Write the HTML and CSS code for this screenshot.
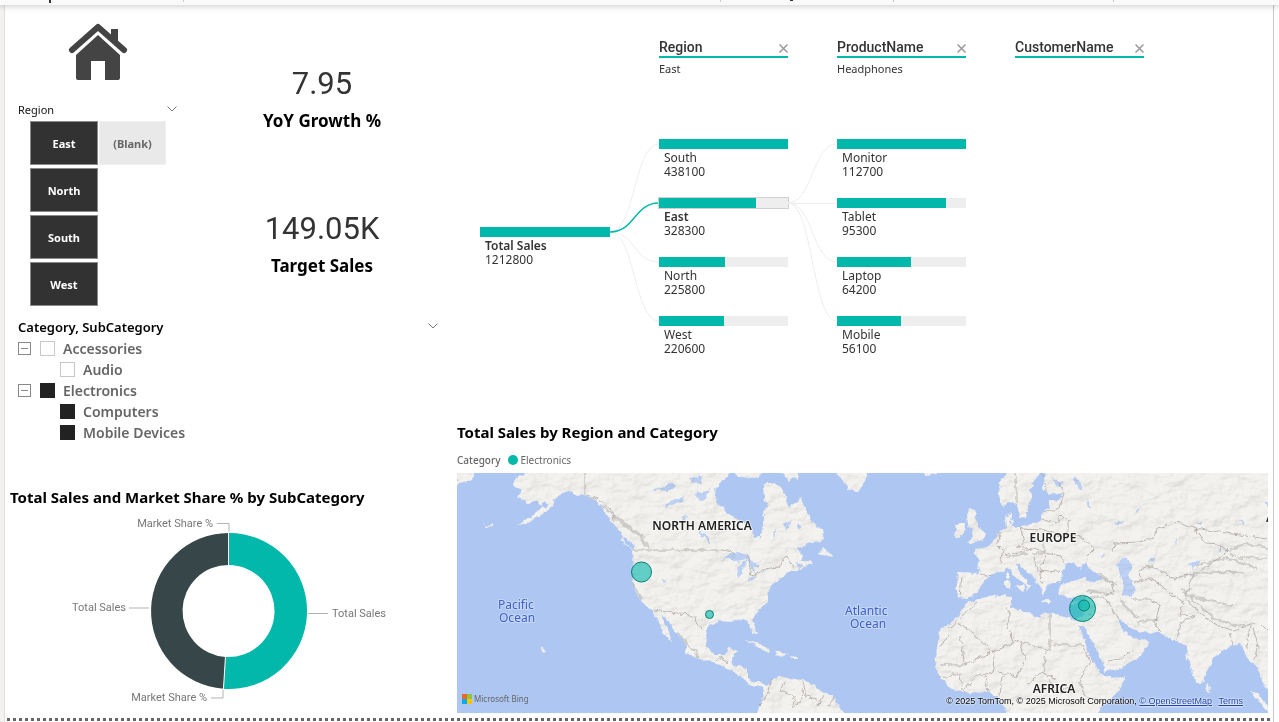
FILE: index.html
```html
<!DOCTYPE html>
<html lang="en">
<head>
<meta charset="utf-8">
<title>Sales report</title>
<link rel="stylesheet" href="styles.css">
</head>
<body>
<div class="app">
  <header class="ribbon">
    <svg class="ribbon-marks" width="1279" height="5" viewBox="0 0 1279 5" aria-hidden="true">
      <path d="M183.500 0v2M720.500 0v2M893.500 0v2M1113.500 0v2" stroke="#c8c8c8"/>
      <path d="M49 0h2v3h-2zM790 0h3v1h-3z" fill="#333"/>
    </svg>
  </header>
  <main class="canvas">
    <section class="left">
      <div class="summary">
        <div class="nav">
          <svg class="home" viewBox="0 0 58 58" role="img" aria-label="Home">
            <path d="M7 31 29 11 51 31V54q0 2-2 2H36V37H22V56H9q-2 0-2-2Z" fill="#444"/>
            <path d="M3 26 29 3 55 26" fill="none" stroke="#fff" stroke-width="9" stroke-linejoin="round"/>
            <path d="M42 5h7v17l-7-6Z" fill="#444"/>
            <path d="M3 26 29 3 55 26" fill="none" stroke="#444" stroke-width="6" stroke-linecap="round" stroke-linejoin="round"/>
          </svg>
          <div class="slicer-head"><span>Region</span>
            <svg class="chevron" viewBox="0 0 10 6" aria-hidden="true"><path d="M.5.5 5 5 9.500.5"/></svg>
          </div>
          <div class="tiles">
            <button class="tile on" aria-pressed="true">East</button>
            <button class="tile" aria-pressed="false">(Blank)</button>
            <button class="tile on" aria-pressed="true">North</button>
            <button class="tile on" aria-pressed="true">South</button>
            <button class="tile on" aria-pressed="true">West</button>
          </div>
        </div>
        <div class="cards">
          <div class="card"><div class="card-value">7.95</div><div class="card-label">YoY Growth %</div></div>
          <div class="card"><div class="card-value">149.05K</div><div class="card-label">Target Sales</div></div>
        </div>
      </div>
      <div class="category">
        <div class="category-head"><span>Category, SubCategory</span>
          <svg class="chevron" viewBox="0 0 10 6" aria-hidden="true"><path d="M.5.5 5 5 9.500.5"/></svg>
        </div>
        <div class="row"><button class="expander" aria-label="Collapse Accessories"></button><label><input type="checkbox">Accessories</label></div>
        <div class="row child"><label><input type="checkbox">Audio</label></div>
        <div class="row"><button class="expander" aria-label="Collapse Electronics"></button><label><input type="checkbox" checked>Electronics</label></div>
        <div class="row child"><label><input type="checkbox" checked>Computers</label></div>
        <div class="row child"><label><input type="checkbox" checked>Mobile Devices</label></div>
      </div>
      <h2 class="title donut-title">Total Sales and Market Share % by SubCategory</h2>
      <svg class="donut" viewBox="0 0 447 196" role="img" aria-label="Total Sales and Market Share by SubCategory">
        <path d="M223.500 21A78 78 0 1 1 218.500 176.800L220.500 144.900A46 46 0 1 0 223.500 53Z" fill="#01b8aa"/>
        <path d="M223.500 21A78 78 0 0 0 218.500 176.800L220.500 144.900A46 46 0 0 1 223.500 53Z" fill="#374649"/>
        <path d="M223.500 20V54M218.400 178 220.500 144" stroke="#fff"/>
        <path d="M212 11.500h12v8M124 96h20M303 101.500h20M206 186h12v-8" fill="none" stroke="#b3b3b3"/>
        <g class="donut-label">
          <text x="208" y="15" text-anchor="end">Market Share %</text>
          <text x="121" y="99" text-anchor="end">Total Sales</text>
          <text x="327" y="105">Total Sales</text>
          <text x="202" y="189" text-anchor="end">Market Share %</text>
        </g>
      </svg>
    </section>

    <section class="right">
      <div class="tree">
        <div class="level level-root">
          <div class="node"><div class="bar"><i style="width:100%"></i></div><b>Total Sales</b><span>1212800</span></div>
        </div>
        <svg class="links" viewBox="0 0 49 200" aria-hidden="true">
          <g fill="none" stroke="#eee"><path d="M0 93C25 93 24 5 49 5M0 93C25 93 24 123 49 123M0 93C25 93 24 182 49 182"/></g>
          <path d="M0 93C25 93 24 64 49 64" fill="none" stroke="#01b8aa" stroke-width="1.500"/>
        </svg>
        <div class="level">
          <div class="level-head"><span>Region</span><button class="close" aria-label="Remove Region"><svg viewBox="0 0 9 9"><path d="M.5.5l8 8m0-8l-8 8"/></svg></button></div>
          <div class="selected">East</div>
          <div class="node"><div class="bar"><i style="width:100%"></i></div><span>South</span><span>438100</span></div>
          <div class="node"><div class="bar active"><i style="width:75%"></i></div><b>East</b><span>328300</span></div>
          <div class="node"><div class="bar"><i style="width:51.500%"></i></div><span>North</span><span>225800</span></div>
          <div class="node"><div class="bar"><i style="width:50.400%"></i></div><span>West</span><span>220600</span></div>
        </div>
        <svg class="links" viewBox="0 0 49 200" aria-hidden="true">
          <g fill="none" stroke="#eee"><path d="M0 64C25 64 24 5 49 5M0 64.500H49M0 64C25 64 24 123 49 123M0 64C25 64 24 182 49 182"/></g>
        </svg>
        <div class="level">
          <div class="level-head"><span>ProductName</span><button class="close" aria-label="Remove ProductName"><svg viewBox="0 0 9 9"><path d="M.5.5l8 8m0-8l-8 8"/></svg></button></div>
          <div class="selected">Headphones</div>
          <div class="node"><div class="bar"><i style="width:100%"></i></div><span>Monitor</span><span>112700</span></div>
          <div class="node"><div class="bar"><i style="width:84.600%"></i></div><span>Tablet</span><span>95300</span></div>
          <div class="node"><div class="bar"><i style="width:57%"></i></div><span>Laptop</span><span>64200</span></div>
          <div class="node"><div class="bar"><i style="width:49.800%"></i></div><span>Mobile</span><span>56100</span></div>
        </div>
        <div></div>
        <div class="level">
          <div class="level-head"><span>CustomerName</span><button class="close" aria-label="Remove CustomerName"><svg viewBox="0 0 9 9"><path d="M.5.5l8 8m0-8l-8 8"/></svg></button></div>
        </div>
      </div>

      <h2 class="title">Total Sales by Region and Category</h2>
      <div class="legend"><b>Category</b><i class="dot"></i><span>Electronics</span></div>
      <div class="map">
        <svg class="map-art" viewBox="0 0 811 240" preserveAspectRatio="xMidYMid slice" role="img" aria-label="Map of total sales by region">
          <defs>
            <filter id="coast" x="0" y="0" width="100%" height="100%">
              <feTurbulence type="fractalNoise" baseFrequency=".16" numOctaves="3" seed="4" result="n"/>
              <feDisplacementMap in="SourceGraphic" in2="n" scale="6" xChannelSelector="R" yChannelSelector="G"/>
            </filter>
            <filter id="relief" x="0" y="0" width="100%" height="100%" color-interpolation-filters="sRGB">
              <feTurbulence type="fractalNoise" baseFrequency=".05 .08" numOctaves="4" seed="9"/>
              <feDiffuseLighting surfaceScale="3" diffuseConstant="1.050" lighting-color="#fff"><feDistantLight azimuth="225" elevation="65"/></feDiffuseLighting>
            </filter>
            <path id="land-shape" d="M0-4H18L15 7 6 9 0 13Z
              M68-4V0L60 5 56 12 65 17 60 24 71 30 80 27 85 34 76 43 61 52 73 49 90 37 95 32 100 24 110 17 120 22 130 23 140 27 146 37 153 47 158 54 165 60 166 69 175 77 175 84 176 92 175 100 176 110 180 122 188 132 195 137 200 147 206 159 215 168 210 155 204 142 210 145 215 154 223 164 230 172 228 179 240 185 256 189 273 197 286 205 293 212 305 214 308 217 305 227 298 244H388L380 230 378 224 366 219 356 212 346 207 330 205 323 203 315 207 310 214 305 209 296 209 290 204 290 195 276 192 275 187 279 177 271 175 268 182 258 182 250 174 249 160 251 152 263 148 275 149 286 146 291 150 296 161 299 160 296 145 301 137 311 129 310 122 316 110 326 104 331 99 343 94 355 91 351 88 343 89 346 84 340 76 350 70 365 69 367 59 356 50 349 37 343 24 340 29 331 34 328 19 318 10 308 10 306 20 311 30 306 40 306 54 303 64 298 65 295 55 283 47 270 40 260 30 258 20 263 9 270 4 271-4Z
              M276-4 280 4 300 5 306 0 302-4ZM322-4 326 1 333 8 336 4 341 8 341-4Z
              M379-4 386 7 391 15 401 20 405 14 411-4ZM365 74 373 79 376 85 361 81ZM338 90 350 93 344 96ZM289 168 298 169 314 177 312 180 300 174ZM317 178 331 181 323 184ZM334 183h6v2h-6Z
              M85 30 91 28 89 34 85 36ZM166 63 178 73 176 77 168 70ZM150 38 156 49 160 52 156 40Z
              M462-4H480V1L468 2ZM83 172 89 177 86 180ZM27 53l10-2v2l-10 1Z
              M553-4 543 10 541 20 545 32 555 29 560 30 563 45 569 45 571 34 575 25 573 17 578 7 587-4Z
              M588-4 586 15 593 22 606 20 603 27 591 27 593 34 586 39 585 45 580 50 563 54 555 54 554 40 549 44 550 55 543 59 535 69 530 74 518 77 518 82 522 87 521 100 501 99 500 107 500 124 510 125 521 120 525 112 533 102 543 99 551 95 558 104 570 113 569 120 573 112 563 100 558 91 563 91 573 102 581 110 586 122 590 114 595 109 603 109 605 99 610 90 618 89 623 95 630 87 631 95 641 102 647 107 638 109 626 105 613 109 603 112 601 120 610 125 627 124 625 144 618 147 610 145 596 140 586 139 583 145 570 140 558 135 553 134 555 124 548 123 530 124 510 130 503 140 496 149 483 157 480 174 478 194 483 204 495 217 513 220 531 219 541 225 553 244H636L650 229 663 217 668 204 651 205 643 200 633 184 626 164 622 152 626 152 635 169 645 187 648 199 670 192 683 184 693 169 685 165 676 167 666 157 661 147 663 145 671 154 683 159 703 160 718 167 730 174 731 187 740 210 745 210 750 197 756 185 775 172 783 170 791 187 800 194 806 210 815 220V-4Z
              M513 35 510 40 511 52 516 57 515 64 511 70 526 67 529 61 522 54 518 45 519 38ZM500 52 508 50 507 62 498 64ZM559 113l9-1-2 6ZM549 107h4l-1 8h-3ZM549 100h3v5h-3ZM585 128h9v2h-9ZM614 129l8-2-4 4ZM750 209l4 6-1 5-4-2ZM552 47l5-1v4h-4ZM793 218l7 3 14 15v6Z"/>
            <clipPath id="land-clip"><use href="#land-shape"/></clipPath>
          </defs>
          <rect width="811" height="240" fill="#adc6f2"/>
          <g filter="url(#coast)">
            <use href="#land-shape" fill="#f0efeb"/>
            <g fill="#adc6f2">
              <path d="M195 14 205 15 213 10 220 13 211 18 200 17ZM206 32 217 26 227 24 225 28 210 34ZM233 5l14-2-4 8-8-3ZM240 20l11-2 3-6-5 14-7 3ZM224 45l7-2-4 5ZM240 59l12 4 2 9-5-6ZM264 85 276 79 291 82 293 85 280 88ZM280 95l6-5 5-5-3 8-6 13ZM291 86l8 3 3 6-5-2 1 8-6-10ZM291 106l10-5-3 4-7 3ZM303 99l8-3-5 4ZM327 52l6-4-1 7-4 2ZM316 60l4-6-3 11ZM341 50l5 3-5 3ZM205 105l3 3-2 3Z"/>
              <path d="M660 90 668 85 676 94 671 102 678 114 676 124 666 122 665 109ZM619 2l7 14-4 2-6-13ZM596 6l11 4-5 3-5-1ZM629 25l5 9-3 0ZM658 50l9-3-6 6ZM679 36l6-2-5 5ZM644 82l4-3-3 6ZM690 87l8-2-1 4ZM730 91l15-4-10 9ZM718 67h2l-1 6ZM740 51l5-2-1 4ZM780 47l9 2-3 3ZM808 28l4 2v6ZM760 77l5-3-2 6Z"/>
            </g>
          </g>
          <g clip-path="url(#land-clip)" opacity=".2"><rect width="811" height="240" filter="url(#relief)" style="mix-blend-mode:multiply"/></g>
          <g class="borders" filter="url(#coast)">
            <path d="M127 0V21L141 26 154 37 158 49M175 77H266L277 79M291 84 294 103 307 96 322 94 326 86 331 84 336 95M197 137 221 141 235 142 247 158M259 187l7-3 4 8M315 205l-5 17-8 10M328 208l-5 10 14 5-1 12 10-8-1-12M346 208l3 15 12 4M366 220l-4 12M378 224l-8 10"/>
            <path d="M559 0 559 29M585 0 591 20M602 10 607 20 603 35 586 40M585 46 600 50 604 42 611 49 611 62 600 62 585 57 564 56M564 55 567 71 560 74 575 76 587 79 587 70M611 62 622 63 638 76 628 86M543 60 541 73 546 78 543 90M547 82 568 78 574 76M575 80 587 80 604 83 608 91M577 83 580 98 593 99 604 97M590 83 583 94 585 110M522 100l12 3M505 103 503 123M550 134l3 11-3 11M521 128 502 146 492 155M502 149 537 179 562 167 593 178 593 141M596 172H625M553 157l3 12M503 163 508 192H481M483 174 492 161M508 192l16-8 13-6M537 180l-1 19-18 5-9 11M563 168l5 18-8 17-24-5M589 178l-3 22 16 20 15-10M625 172l8 16-10 18 4 18 20 4M570 212l14-12 15 5M482 204l22-3M500 200l8 20M528 203l3 16M545 203l-2 20"/>
            <path d="M626 124 647 124 662 147M626 124 633 143M642 103 655 110 658 118 647 124M660 112l-8-5M674 126 692 126 703 131 698 151 703 160M678 110 692 105 714 120 726 129 723 142 738 143 724 150 720 167M656 79 657 70 682 69 697 65 699 56 721 49 739 55 748 70 762 71 771 78 744 98 718 106 694 93 682 96 683 106M762 72 780 85 811 85M739 55 768 60 811 66M737 101 728 125 740 138 758 151 777 158 793 152 790 175M773 160l3 12M796 155l5 18-4 14M803 150l8 8M650 188l14-2 14-10"/>
          </g>
          <g class="ridges" filter="url(#coast)">
            <path d="M146 33 168 53 182 62 191 75M176 110l9 17M221 160l22 25M163 47l25 18M725 115 738 129 755 144 778 153 799 151M729 103 758 99 786 99M725 120 750 127 776 133M740 92 770 85 800 95M772 77 790 70 811 75M640 100 652 107M662 126 681 145M680 150l22-5M630 118l28 4M550 84l20-3"/>
          </g>
          <g class="bubbles">
            <circle cx="184.500" cy="99" r="10"/><circle cx="252.500" cy="141.500" r="4"/>
            <circle cx="625.500" cy="135.500" r="13"/><circle cx="627" cy="132.500" r="5.500"/>
          </g>
          <g class="continent" text-anchor="middle">
            <text x="245" y="57">NORTH AMERICA</text><text x="596" y="69">EUROPE</text><text x="597" y="220">AFRICA</text><text x="809" y="49" text-anchor="start">A</text>
          </g>
          <g class="ocean">
            <text x="41" y="136">Pacific</text><text x="42" y="149">Ocean</text>
            <text x="388" y="142">Atlantic</text><text x="393" y="155">Ocean</text>
          </g>
        </svg>
        <div class="map-footer">
          <span class="bing"><svg width="10" height="10" viewBox="0 0 10 10" aria-hidden="true"><path d="M0 0h5v5H0z" fill="#f26522"/><path d="M5 0h5v5H5z" fill="#8dc63f"/><path d="M0 5h5v5H0z" fill="#00aeef"/><path d="M5 5h5v5H5z" fill="#ffc20e"/></svg>Microsoft Bing</span>
          <span class="credits">© 2025 TomTom, © 2025 Microsoft Corporation, <a href="#osm">© OpenStreetMap</a> <a class="terms" href="#terms">Terms</a></span>
        </div>
      </div>
    </section>
  </main>
</div>
</body>
</html>
```
FILE: styles.css
```css
* { box-sizing: border-box; }
body {
  margin: 0;
  background: #fff;
  color: #333;
  font-family: "Noto Sans", "Open Sans", sans-serif;
  font-size: 12px;
}
button { border: 0; padding: 0; background: none; font: inherit; color: inherit; }
.app { min-height: 100vh; display: flex; flex-direction: column; overflow: hidden; }
.ribbon { height: 5px; background: #fafafa; overflow: hidden; z-index: 1; box-shadow: 0 0 6px 1px rgba(0, 0, 0, .22); }
.ribbon-marks { display: block; }
.canvas {
  flex: 1;
  display: grid;
  grid-template-columns: 453px 1fr;
  margin-right: 5px;
  padding-right: 5px;
  border-left: 4px solid #f3f2f1;
  border-right: 1px solid #c8c8c8;
  background: repeating-linear-gradient(90deg, transparent 0 3px, #666 3px 6px) left bottom 1px / 100% 3px no-repeat;
  box-shadow: inset 1px 0 #e1dfdd;
}
.left { display: flex; flex-direction: column; min-width: 0; padding-left: 1px; }
.summary { display: flex; padding: 19px 0 0 13px; }
.nav { width: 160px; }
.home { display: block; width: 58px; height: 58px; margin-left: 51px; overflow: visible; }
.slicer-head { display: flex; justify-content: space-between; align-items: center; height: 20px; margin-top: 17px; padding-right: 1px; color: #111; font-size: 11px; }
.chevron { width: 10px; height: 6px; overflow: visible; }
.chevron path { fill: none; stroke: #777; }
.tiles { display: grid; grid-template-columns: 68px 67px; gap: 3px 1px; margin: 2px 0 0 12px; }
.tile { height: 44px; border: 1px solid #f0f0f0; background: #e9e9e9; color: #666; font-size: 11px; font-weight: 700; }
.tile.on { grid-column: 1; background: #323232; border-color: #8a8a8a; color: #fff; }
.cards { padding: 40px 0 0 28px; }
.card { width: 232px; text-align: center; }
.card + .card { margin-top: 76px; }
.card-value { font: 31px/40px Roboto, sans-serif; color: #333; }
.card-label { font-size: 17px; line-height: 24px; font-weight: 700; color: #000; margin-top: 5px; }
.category { margin-top: 10px; padding: 0 19px 0 13px; color: #666; font-size: 14px; font-weight: 600; }
.category-head { display: flex; justify-content: space-between; align-items: center; height: 22px; font-size: 13px; color: #000; }
.category-head .chevron { margin-bottom: 3px; }
.row { display: flex; align-items: center; gap: 9px; height: 21px; }
.row.child { padding-left: 42px; }
.row label { display: flex; align-items: center; gap: 8px; }
.row input { appearance: none; width: 15px; height: 15px; margin: 0; border: 1px solid #c8c8c8; background: #fff; }
.row input:checked { background: #222; border-color: #222; }
.expander { width: 13px; height: 13px; border: 1px solid #888; background: linear-gradient(#888, #888) center / 7px 1px no-repeat; }
.title { margin: 0; color: #000; font-size: 15px; line-height: 20px; font-weight: 700; white-space: nowrap; }
.donut-title { padding-left: 5px; margin-top: 44px; }
.donut { display: block; width: 100%; max-width: 447px; margin-top: 5px; }
.donut-label text { font: 11px Roboto, sans-serif; fill: #777; }

.right { min-width: 0; padding-top: 32px; }
.tree { display: grid; grid-template-columns: 130px 49px 129px 49px 129px 49px 129px; height: 385px; padding-left: 23px; }
.level-head { display: flex; justify-content: space-between; align-items: center; height: 21px; border-bottom: 2px solid #01b8aa; font: 500 14px Roboto, sans-serif; }
.close { width: 9px; height: 9px; margin-top: 3px; line-height: 0; }
.close svg { width: 9px; height: 9px; }
.close path { fill: none; stroke: #999; stroke-width: 1.500; }
.selected { height: 81px; padding-top: 2px; line-height: 18px; font-size: 11px; }
.level-root { padding-top: 190px; }
.node { height: 59px; font-size: 12px; line-height: 14px; }
.node b, .node span { display: block; padding-left: 5px; }
.node b { font-weight: 600; }
.bar { height: 10px; margin-bottom: 2px; background: #eee; }
.bar i { display: block; height: 100%; background: #01b8aa; }
.bar.active { outline: 1px solid #d0d0d0; }
.links { width: 49px; height: 200px; margin-top: 102px; }
.legend { display: flex; align-items: center; height: 16px; margin: 10px 0 5px; font-size: 10px; color: #666; }
.legend b { font-weight: 500; }
.dot { width: 10px; height: 10px; border-radius: 50%; margin: 0 2px 0 8px; background: #01b8aa; }
.map { display: grid; height: 240px; overflow: hidden; }
.map-art, .map-footer { grid-area: 1 / 1; width: 100%; height: 240px; }
.borders path { fill: none; stroke: #aaa39f; stroke-width: 1; opacity: .75; }
.ridges path { fill: none; stroke: #aaa; stroke-width: 2; opacity: .5; }
.bubbles circle { fill: #01b8aa; fill-opacity: .6; stroke: #087f77; }
.continent text { font: 600 12px "Noto Sans", sans-serif; fill: #222; stroke: #fff; stroke-width: 2; stroke-opacity: .6; paint-order: stroke; }
.ocean text { font: 12px "Noto Sans", sans-serif; fill: #3e60c4; stroke: #c7d8f7; stroke-width: 2; paint-order: stroke; }
.map-footer { display: flex; justify-content: space-between; align-items: flex-end; padding: 0 25px 6px 5px; z-index: 1; }
.bing { display: flex; align-items: center; gap: 2px; font: 8px/16px "Noto Sans", sans-serif; color: #666; }
.credits { font: 9px/12px "Liberation Sans", Arial, sans-serif; color: #000; text-shadow: 0 0 2px #fff, 0 0 2px #fff; }
.credits a { color: #2444a8; }
.terms { margin-left: 4px; }
```
